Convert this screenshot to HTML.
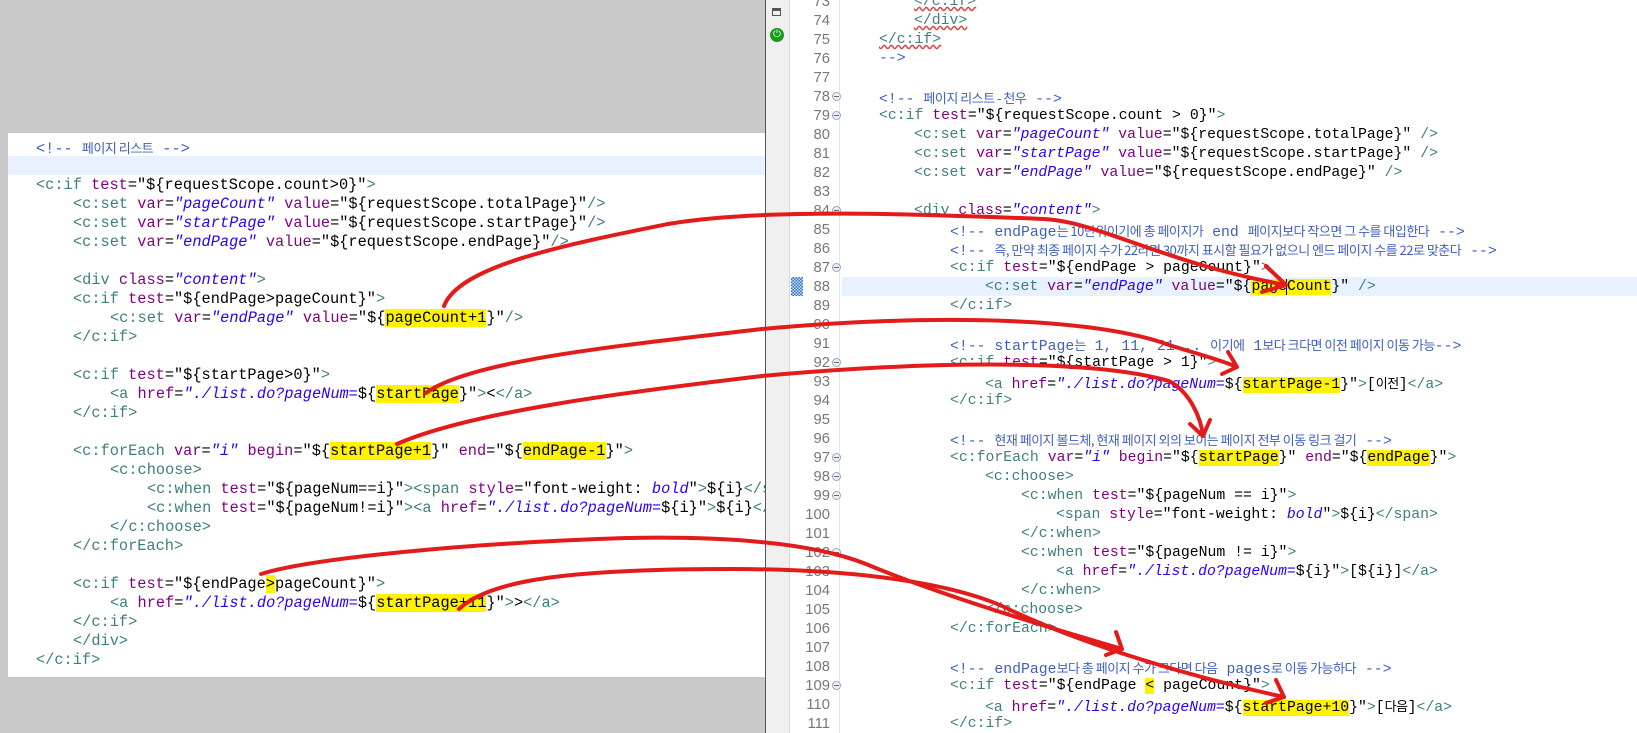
<!DOCTYPE html>
<html><head><meta charset="utf-8">
<style>
*{margin:0;padding:0;box-sizing:border-box}
body{width:1637px;height:733px;overflow:hidden;background:#c8c8c8;position:relative;font-family:"Liberation Mono","Noto Sans CJK KR",monospace}
#left{position:absolute;left:8px;top:133px;width:757px;height:544px;background:#fff;overflow:hidden}
#right{position:absolute;left:765px;top:0;width:872px;height:733px;background:#fff;border-left:1px solid #555;overflow:hidden}
#gut{position:absolute;left:0;top:0;width:24px;height:733px;background:#f0f0f0;border-right:1px solid #d8d8d8}
#nums{position:absolute;left:24px;top:0;width:50px;height:733px;border-right:1px solid #e6e6e6}
.l{position:absolute;white-space:pre;height:19px;line-height:19px}
#left .l{font-size:15.3px}
#right .l{font-size:14.8px}
.n{position:absolute;left:0;width:40px;text-align:right;color:#787878;font-size:14.8px;line-height:19px;height:19px;font-family:"Liberation Sans",sans-serif}
.f{position:absolute;left:42px;width:9px;height:9px;border:1px solid #9aa;border-radius:50%;background:#eef}
.f:after{content:"";position:absolute;left:1px;top:3px;width:5px;height:1px;background:#667}
.t{color:#3f7f7f}.a{color:#7f007f}.s{color:#2a00ff;font-style:italic}.c{color:#3f5fbf}
.k{font-family:"Noto Sans CJK KR",sans-serif;font-size:13px;letter-spacing:-0.5px}
.h{background:#fff200}
.sq{text-decoration:underline wavy #e04040}
</style></head><body>
<div id="left">
<div style="position:absolute;left:0;top:23px;width:757px;height:19px;background:#e8f2fe"></div>
<div class="l c" style="left:28px;top:5px">&lt;!-- <span class="k">페이지 리스트</span> --&gt;</div>
<div class="l" style="left:28px;top:43px"><span class="t">&lt;c:if</span> <span class="a">test</span>="${requestScope.count&gt;0}"<span class="t">&gt;</span></div>
<div class="l" style="left:65px;top:62px"><span class="t">&lt;c:set</span> <span class="a">var</span>=<span class="s">"pageCount"</span> <span class="a">value</span>="${requestScope.totalPage}"<span class="t">/&gt;</span></div>
<div class="l" style="left:65px;top:81px"><span class="t">&lt;c:set</span> <span class="a">var</span>=<span class="s">"startPage"</span> <span class="a">value</span>="${requestScope.startPage}"<span class="t">/&gt;</span></div>
<div class="l" style="left:65px;top:100px"><span class="t">&lt;c:set</span> <span class="a">var</span>=<span class="s">"endPage"</span> <span class="a">value</span>="${requestScope.endPage}"<span class="t">/&gt;</span></div>
<div class="l" style="left:65px;top:138px"><span class="t">&lt;div</span> <span class="a">class</span>=<span class="s">"content"</span><span class="t">&gt;</span></div>
<div class="l" style="left:65px;top:157px"><span class="t">&lt;c:if</span> <span class="a">test</span>="${endPage&gt;pageCount}"<span class="t">&gt;</span></div>
<div class="l" style="left:102px;top:176px"><span class="t">&lt;c:set</span> <span class="a">var</span>=<span class="s">"endPage"</span> <span class="a">value</span>="${<span class="h">pageCount+1</span>}"<span class="t">/&gt;</span></div>
<div class="l t" style="left:65px;top:195px">&lt;/c:if&gt;</div>
<div class="l" style="left:65px;top:233px"><span class="t">&lt;c:if</span> <span class="a">test</span>="${startPage&gt;0}"<span class="t">&gt;</span></div>
<div class="l" style="left:102px;top:252px"><span class="t">&lt;a</span> <span class="a">href</span>=<span class="s">"./list.do?pageNum=</span>${<span class="h">startPage</span>}"<span class="t">&gt;</span>&lt;<span class="t">&lt;/a&gt;</span></div>
<div class="l t" style="left:65px;top:271px">&lt;/c:if&gt;</div>
<div class="l" style="left:65px;top:309px"><span class="t">&lt;c:forEach</span> <span class="a">var</span>=<span class="s">"i"</span> <span class="a">begin</span>="${<span class="h">startPage+1</span>}" <span class="a">end</span>="${<span class="h">endPage-1</span>}"<span class="t">&gt;</span></div>
<div class="l t" style="left:102px;top:328px">&lt;c:choose&gt;</div>
<div class="l" style="left:139px;top:347px"><span class="t">&lt;c:when</span> <span class="a">test</span>="${pageNum==i}"<span class="t">&gt;&lt;span</span> <span class="a">style</span>="font-weight: <span class="s">bold</span>"<span class="t">&gt;</span>${i}<span class="t">&lt;/span&gt;&lt;/c:when&gt;</span></div>
<div class="l" style="left:139px;top:366px"><span class="t">&lt;c:when</span> <span class="a">test</span>="${pageNum!=i}"<span class="t">&gt;&lt;a</span> <span class="a">href</span>=<span class="s">"./list.do?pageNum=</span>${i}"<span class="t">&gt;</span>${i}<span class="t">&lt;/a&gt;&lt;/c:when&gt;</span></div>
<div class="l t" style="left:102px;top:385px">&lt;/c:choose&gt;</div>
<div class="l t" style="left:65px;top:404px">&lt;/c:forEach&gt;</div>
<div class="l" style="left:65px;top:442px"><span class="t">&lt;c:if</span> <span class="a">test</span>="${endPage<span class="h">&gt;</span>pageCount}"<span class="t">&gt;</span></div>
<div class="l" style="left:102px;top:461px"><span class="t">&lt;a</span> <span class="a">href</span>=<span class="s">"./list.do?pageNum=</span>${<span class="h">startPage+11</span>}"<span class="t">&gt;</span>&gt;<span class="t">&lt;/a&gt;</span></div>
<div class="l t" style="left:65px;top:480px">&lt;/c:if&gt;</div>
<div class="l t" style="left:65px;top:499px">&lt;/div&gt;</div>
<div class="l t" style="left:28px;top:518px">&lt;/c:if&gt;</div>
</div>

<div id="right">
<div id="gut">
<div style="position:absolute;left:6px;top:8px;width:9px;height:8px;border:1.5px solid #555;border-top-width:3px"></div>
<div style="position:absolute;left:4px;top:28px;width:14px;height:14px;border-radius:50%;background:#1a9a1a;color:#fff;font-size:10px;line-height:14px;text-align:center;font-family:'DejaVu Sans',sans-serif">⏻</div>
</div>
<div style="position:absolute;left:25px;top:277px;width:12px;height:19px;background:repeating-conic-gradient(#2a6fd0 0 25%,#cfe0f7 0 50%) 0 0/3px 3px"></div>
<div id="nums">
<div class="n" style="top:-7px">73</div><div class="n" style="top:12px">74</div><div class="n" style="top:31px">75</div><div class="n" style="top:50px">76</div><div class="n" style="top:69px">77</div><div class="n" style="top:88px">78</div><div class="n" style="top:107px">79</div><div class="n" style="top:126px">80</div><div class="n" style="top:145px">81</div><div class="n" style="top:164px">82</div><div class="n" style="top:183px">83</div><div class="n" style="top:202px">84</div><div class="n" style="top:221px">85</div><div class="n" style="top:240px">86</div><div class="n" style="top:259px">87</div><div class="n" style="top:278px">88</div><div class="n" style="top:297px">89</div><div class="n" style="top:316px">90</div><div class="n" style="top:335px">91</div><div class="n" style="top:354px">92</div><div class="n" style="top:373px">93</div><div class="n" style="top:392px">94</div><div class="n" style="top:411px">95</div><div class="n" style="top:430px">96</div><div class="n" style="top:449px">97</div><div class="n" style="top:468px">98</div><div class="n" style="top:487px">99</div><div class="n" style="top:506px">100</div><div class="n" style="top:525px">101</div><div class="n" style="top:544px">102</div><div class="n" style="top:563px">103</div><div class="n" style="top:582px">104</div><div class="n" style="top:601px">105</div><div class="n" style="top:620px">106</div><div class="n" style="top:639px">107</div><div class="n" style="top:658px">108</div><div class="n" style="top:677px">109</div><div class="n" style="top:696px">110</div><div class="n" style="top:715px">111</div>
<div class="f" style="top:92px"></div><div class="f" style="top:111px"></div><div class="f" style="top:206px"></div><div class="f" style="top:263px"></div><div class="f" style="top:358px"></div><div class="f" style="top:453px"></div><div class="f" style="top:472px"></div><div class="f" style="top:491px"></div><div class="f" style="top:548px"></div><div class="f" style="top:681px"></div>
</div>
<div style="position:absolute;left:76px;top:277px;width:796px;height:19px;background:#e8f2fe"></div>
<div class="l t" style="left:148px;top:-7px"><span class="sq">&lt;/c:if&gt;</span></div>
<div class="l t" style="left:148px;top:12px"><span class="sq">&lt;/div&gt;</span></div>
<div class="l t" style="left:113px;top:31px"><span class="sq">&lt;/c:if&gt;</span></div>
<div class="l c" style="left:113px;top:50px">--&gt;</div>
<div class="l c" style="left:113px;top:88px">&lt;!-- <span class="k">페이지 리스트 - 천우</span> --&gt;</div>
<div class="l" style="left:113px;top:107px"><span class="t">&lt;c:if</span> <span class="a">test</span>="${requestScope.count &gt; 0}"<span class="t">&gt;</span></div>
<div class="l" style="left:148px;top:126px"><span class="t">&lt;c:set</span> <span class="a">var</span>=<span class="s">"pageCount"</span> <span class="a">value</span>="${requestScope.totalPage}" <span class="t">/&gt;</span></div>
<div class="l" style="left:148px;top:145px"><span class="t">&lt;c:set</span> <span class="a">var</span>=<span class="s">"startPage"</span> <span class="a">value</span>="${requestScope.startPage}" <span class="t">/&gt;</span></div>
<div class="l" style="left:148px;top:164px"><span class="t">&lt;c:set</span> <span class="a">var</span>=<span class="s">"endPage"</span> <span class="a">value</span>="${requestScope.endPage}" <span class="t">/&gt;</span></div>
<div class="l" style="left:148px;top:202px"><span class="t">&lt;div</span> <span class="a">class</span>=<span class="s">"content"</span><span class="t">&gt;</span></div>
<div class="l c" style="left:184px;top:221px">&lt;!-- endPage<span class="k">는 10단위이기에 총 페이지가</span> end <span class="k">페이지보다 작으면 그 수를 대입한다</span> --&gt;</div>
<div class="l c" style="left:184px;top:240px">&lt;!-- <span class="k">즉, 만약 최종 페이지 수가 22라면 30까지 표시할 필요가 없으니 엔드 페이지 수를 22로 맞춘다</span> --&gt;</div>
<div class="l" style="left:184px;top:259px"><span class="t">&lt;c:if</span> <span class="a">test</span>="${endPage &gt; pageCount}"<span class="t">&gt;</span></div>
<div class="l" style="left:219px;top:278px"><span class="t">&lt;c:set</span> <span class="a">var</span>=<span class="s">"endPage"</span> <span class="a">value</span>="${<span class="h">page<span style="border-left:1px solid #000;margin-left:-1px">C</span>ount</span>}" <span class="t">/&gt;</span></div>
<div class="l t" style="left:184px;top:297px">&lt;/c:if&gt;</div>
<div class="l c" style="left:184px;top:335px">&lt;!-- startPage<span class="k">는</span> 1, 11, 21 .. <span class="k">이기에</span> 1<span class="k">보다 크다면 이전 페이지 이동 가능</span>--&gt;</div>
<div class="l" style="left:184px;top:354px"><span class="t">&lt;c:if</span> <span class="a">test</span>="${startPage &gt; 1}"<span class="t">&gt;</span></div>
<div class="l" style="left:219px;top:373px"><span class="t">&lt;a</span> <span class="a">href</span>=<span class="s">"./list.do?pageNum=</span>${<span class="h">startPage-1</span>}"<span class="t">&gt;</span>[<span class="k">이전</span>]<span class="t">&lt;/a&gt;</span></div>
<div class="l t" style="left:184px;top:392px">&lt;/c:if&gt;</div>
<div class="l c" style="left:184px;top:430px">&lt;!-- <span class="k">현재 페이지 볼드체, 현재 페이지 외의 보이는 페이지 전부 이동 링크 걸기</span> --&gt;</div>
<div class="l" style="left:184px;top:449px"><span class="t">&lt;c:forEach</span> <span class="a">var</span>=<span class="s">"i"</span> <span class="a">begin</span>="${<span class="h">startPage</span>}" <span class="a">end</span>="${<span class="h">endPage</span>}"<span class="t">&gt;</span></div>
<div class="l t" style="left:219px;top:468px">&lt;c:choose&gt;</div>
<div class="l" style="left:255px;top:487px"><span class="t">&lt;c:when</span> <span class="a">test</span>="${pageNum == i}"<span class="t">&gt;</span></div>
<div class="l" style="left:290px;top:506px"><span class="t">&lt;span</span> <span class="a">style</span>="font-weight: <span class="s">bold</span>"<span class="t">&gt;</span>${i}<span class="t">&lt;/span&gt;</span></div>
<div class="l t" style="left:255px;top:525px">&lt;/c:when&gt;</div>
<div class="l" style="left:255px;top:544px"><span class="t">&lt;c:when</span> <span class="a">test</span>="${pageNum != i}"<span class="t">&gt;</span></div>
<div class="l" style="left:290px;top:563px"><span class="t">&lt;a</span> <span class="a">href</span>=<span class="s">"./list.do?pageNum=</span>${i}"<span class="t">&gt;</span>[${i}]<span class="t">&lt;/a&gt;</span></div>
<div class="l t" style="left:255px;top:582px">&lt;/c:when&gt;</div>
<div class="l t" style="left:219px;top:601px">&lt;/c:choose&gt;</div>
<div class="l t" style="left:184px;top:620px">&lt;/c:forEach&gt;</div>
<div class="l c" style="left:184px;top:658px">&lt;!-- endPage<span class="k">보다 총 페이지 수가 크다면 다음</span> pages<span class="k">로 이동 가능하다</span> --&gt;</div>
<div class="l" style="left:184px;top:677px"><span class="t">&lt;c:if</span> <span class="a">test</span>="${endPage <span class="h">&lt;</span> pageCount}"<span class="t">&gt;</span></div>
<div class="l" style="left:219px;top:696px"><span class="t">&lt;a</span> <span class="a">href</span>=<span class="s">"./list.do?pageNum=</span>${<span class="h">startPage+10</span>}"<span class="t">&gt;</span>[<span class="k">다음</span>]<span class="t">&lt;/a&gt;</span></div>
<div class="l t" style="left:184px;top:715px">&lt;/c:if&gt;</div>
</div>

<svg style="position:absolute;left:0;top:0" width="1637" height="733" fill="none" stroke="#e31b1b" stroke-width="4" stroke-linecap="round" stroke-linejoin="round">
<path d="M444,306 C459,266 564,245 668,224 C760,208 919,214 1044,219 C1100,222 1160,262 1286,285 M1266,266 L1286,285 L1262,292"/>
<path d="M426,393 C470,360 626,345 762,329 C940,313 1096,318 1169,345 C1201,355 1221,360 1237,367 M1228,352 L1237,367 L1222,374"/>
<path d="M397,444 C470,412 626,392 762,376 C940,360 1096,360 1169,381 C1190,392 1201,418 1203,436 M1190,424 L1203,436 L1210,420"/>
<path d="M261,574 C313,558 470,543 626,538 C731,536 814,543 866,564 C940,595 1044,626 1122,649 M1116,632 L1122,649 L1106,655"/>
<path d="M459,609 C491,579 574,569 731,569 C835,569 940,579 1002,606 C1086,647 1201,679 1284,697 M1276,680 L1284,697 L1266,703"/>
</svg>
</body></html>
